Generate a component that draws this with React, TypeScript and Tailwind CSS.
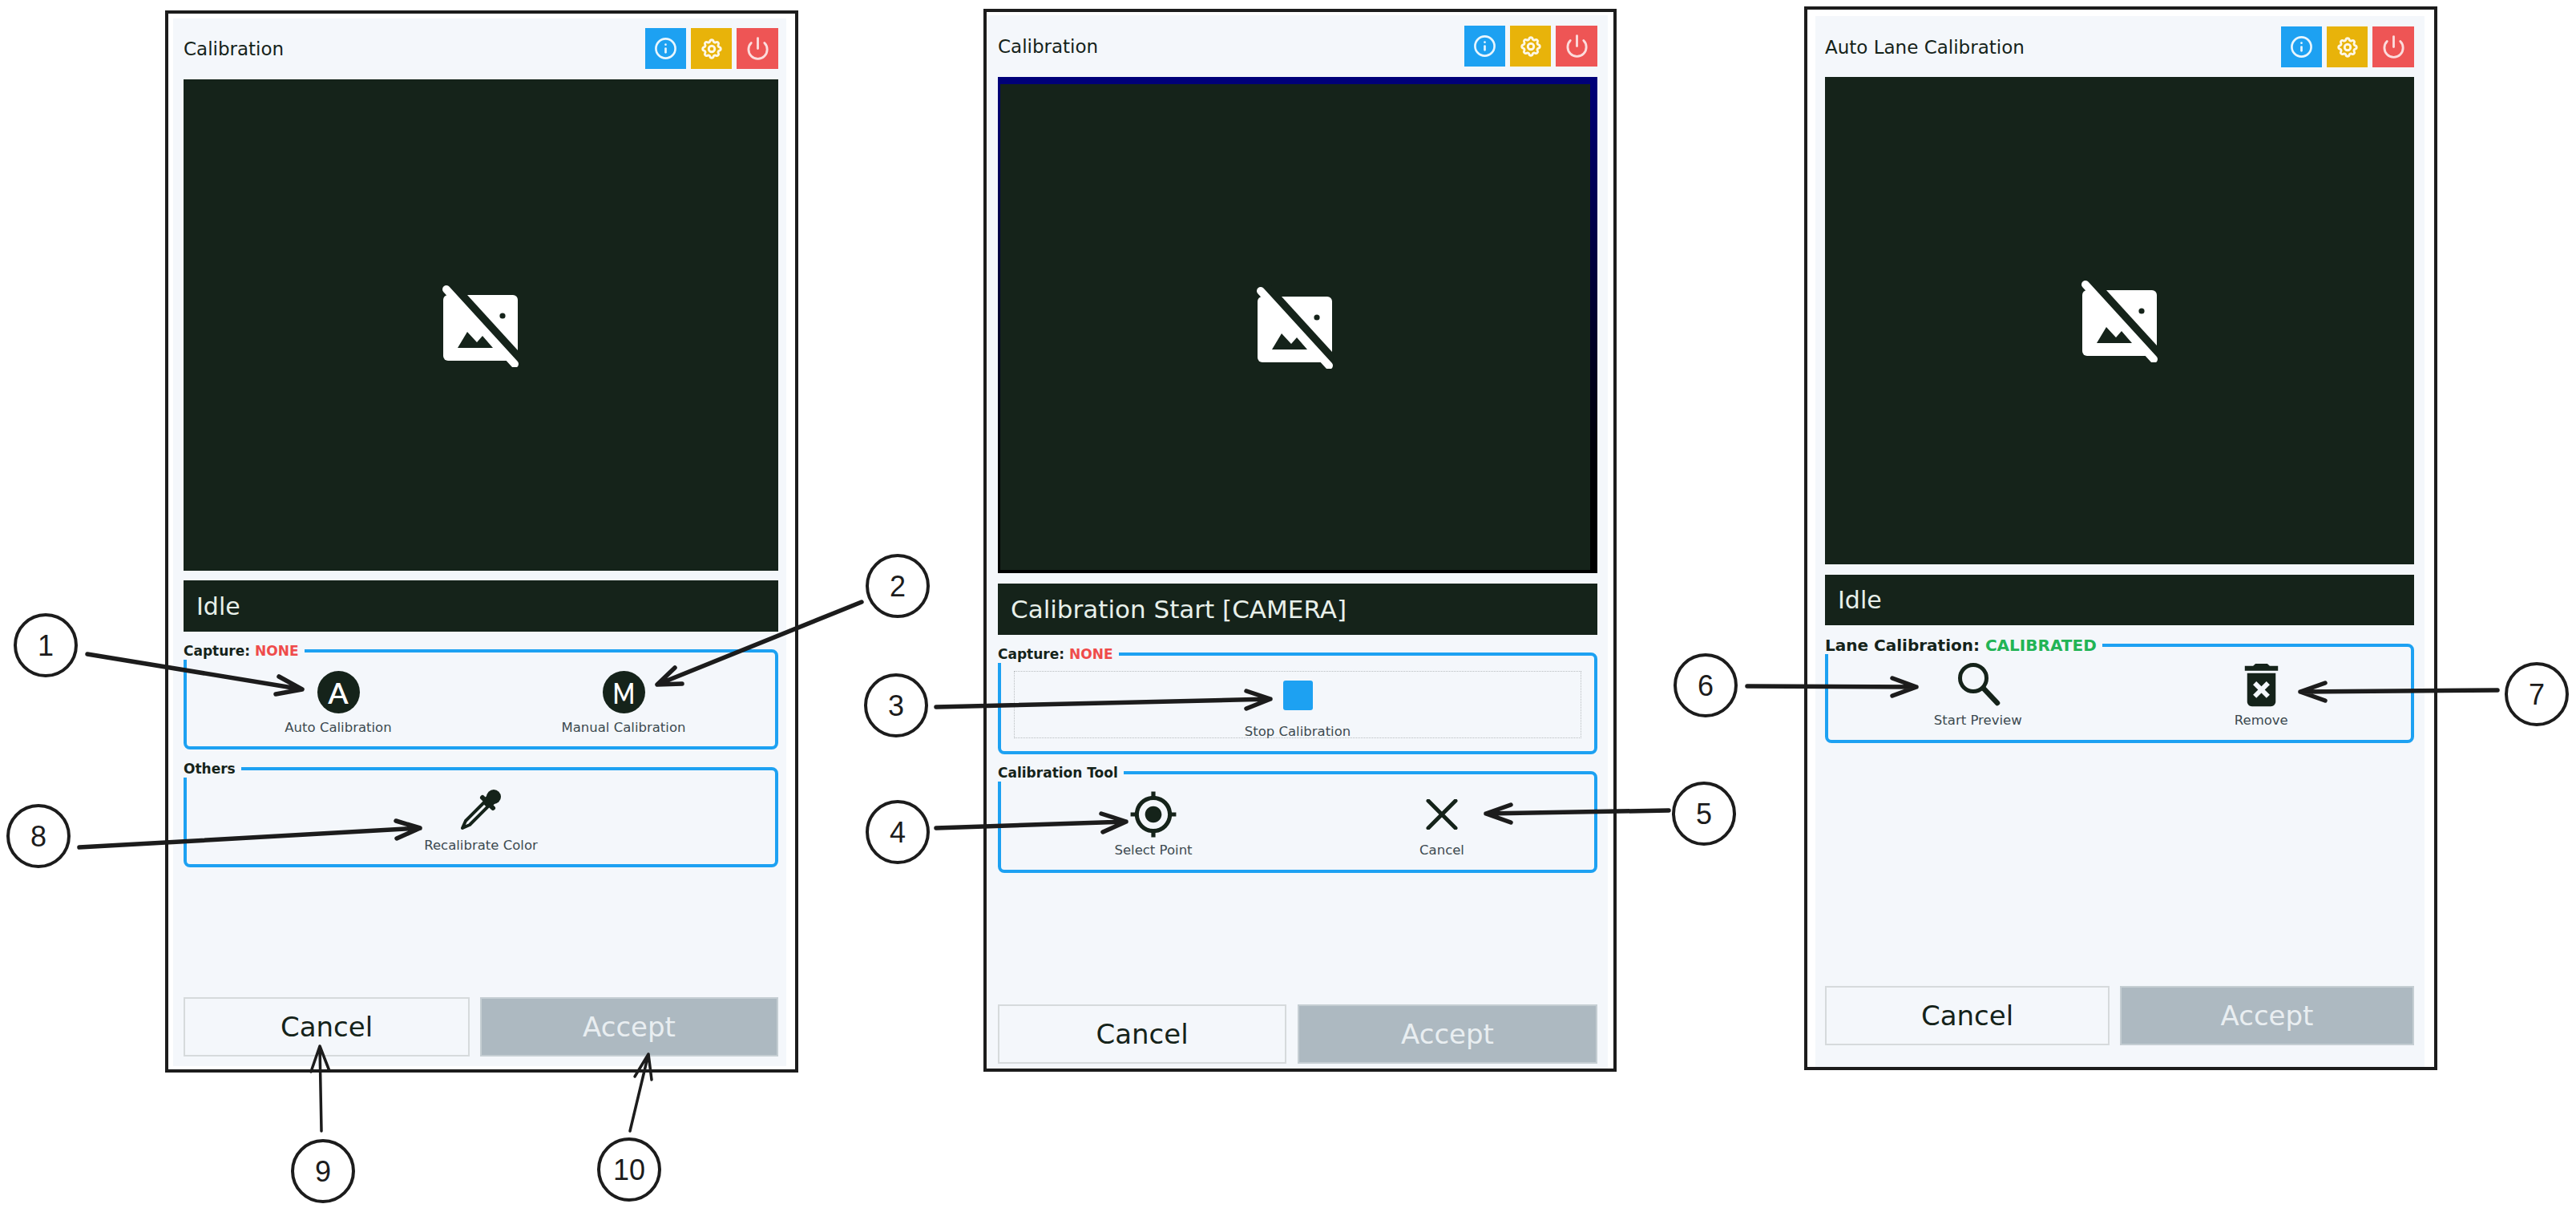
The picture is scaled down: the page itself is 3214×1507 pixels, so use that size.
import React from "react";
import { Info, Power } from "lucide-react";
import { TbSettings } from "react-icons/tb";
import { MdGpsFixed, MdDeleteForever } from "react-icons/md";

const DARK = "#15231a";

const NoImage = () => (
  <svg width="100" height="104" viewBox="0 0 100 104">
    <rect x="3" y="14" width="93" height="82" rx="6" fill="#fff" />
    <path d="M21 80 L33 60 L45 73 L52 65 L65 80 Z" fill={DARK} />
    <circle cx="77" cy="40" r="3.6" fill={DARK} />
    <path d="M33 14 L96 83 L100 104 L92 100 L7 7 L20 0 Z" fill={DARK} />
    <path d="M7 7 L92 100" stroke="#fff" strokeWidth="10" strokeLinecap="round" />
  </svg>
);

const Search = () => (
  <svg width="56" height="56" viewBox="0 0 56 56" fill="none" stroke={DARK} strokeLinecap="round">
    <circle cx="22" cy="20" r="16.5" strokeWidth="5" />
    <path d="M35 33 L52 51" strokeWidth="6.5" />
  </svg>
);

const Cross = () => (
  <svg width="40" height="38" viewBox="0 0 40 38" fill="none" stroke={DARK} strokeWidth="5" strokeLinecap="round">
    <path d="M3 2 L37 36 M37 2 L3 36" />
  </svg>
);

const Dropper = () => (
  <svg width="56" height="56" viewBox="0 0 56 56" fill="none" stroke={DARK} strokeLinecap="round" strokeLinejoin="round">
    <circle cx="44" cy="12" r="9" fill={DARK} stroke="none" />
    <path d="M38 18 L44 12" strokeWidth="14" />
    <path d="M30 13 L43 26" strokeWidth="6" />
    <path d="M33 18 L9 42 L5 51 L14 47 L38 23" strokeWidth="4" />
  </svg>
);

const Letter = ({ children, className }: { children: string; className?: string }) => (
  <div className="w-[53px] h-[53px] rounded-full bg-[#15231a] flex items-center justify-center text-white text-[37px] leading-none font-semibold font-['Lato',sans-serif]">
    <span className={className}>{children}</span>
  </div>
);

const Header = ({ title }: { title: string }) => (
  <div className="flex items-center justify-between">
    <div className="text-[23px] leading-[30px] text-[#15231a]">{title}</div>
    <div className="flex gap-[6px]">
      <div className="w-[51px] h-[51px] bg-[#1da1f2] flex items-center justify-center text-white/90">
        <Info size={29} strokeWidth={2.2} />
      </div>
      <div className="w-[51px] h-[51px] bg-[#e8b30a] flex items-center justify-center text-white/90">
        <TbSettings size={30} strokeWidth={2.3} />
      </div>
      <div className="w-[52px] h-[51px] bg-[#ee5555] flex items-center justify-center text-white/80">
        <Power size={31} strokeWidth={2.2} />
      </div>
    </div>
  </div>
);

const Status = ({ className, children }: { className: string; children: string }) => (
  <div className={"bg-[#15231a] text-[#e8f0ea] pl-[16px] flex items-center " + className}>{children}</div>
);

const Group = ({
  legend,
  state,
  stateClass,
  legendClass = "text-[17px]",
  className,
  children,
}: {
  legend: string;
  state?: string;
  stateClass?: string;
  legendClass?: string;
  className: string;
  children: React.ReactNode;
}) => (
  <fieldset className={"border-4 border-[#1da1f2] rounded-[8px] " + className}>
    <legend className={"-ml-[4px] pr-[7px] bg-[#f4f7fb] leading-[22px] font-bold text-[#15231a] " + legendClass}>
      {legend}
      {state && <span className={stateClass}> {state}</span>}
    </legend>
    {children}
  </fieldset>
);

const Tool = ({ icon, label }: { icon: React.ReactNode; label: string }) => (
  <div className="flex flex-col items-center">
    <div className="h-[52px] flex items-center justify-center text-[#15231a]">{icon}</div>
    <div className="mt-[8px] text-[16.5px] leading-[22px] text-[#3c4a50]">{label}</div>
  </div>
);

const Buttons = ({ cancel, gap }: { cancel: string; gap: string }) => (
  <div className={"mt-auto flex h-[74px] " + gap}>
    <div className={"border-2 border-[#d6dadc] flex items-center justify-center text-[34px] text-[#15231a] " + cancel}>
      Cancel
    </div>
    <div className="flex-1 bg-[#adb9c1] border-2 border-[#c5ced3] flex items-center justify-center text-[34px] text-[#e9eef1]">
      Accept
    </div>
  </div>
);

const Panel = ({
  outer,
  sheet,
  children,
}: {
  outer: string;
  sheet: string;
  children: React.ReactNode;
}) => (
  <div className={"shrink-0 border-4 border-[#1c1c1c] bg-white " + outer}>
    <div className={"h-full flex flex-col bg-[#f4f7fb] " + sheet}>{children}</div>
  </div>
);

const Callout = ({ n, cx, cy }: { n: number; cx: number; cy: number }) => (
  <g>
    <circle cx={cx} cy={cy} r="38" fill="#fff" stroke="#1c1c1c" strokeWidth="4" />
    <text
      x={cx}
      y={cy + 13}
      textAnchor="middle"
      fontSize="36"
      fill="#1c1c1c"
      fontFamily="'Liberation Sans', sans-serif"
    >
      {n}
    </text>
  </g>
);

const calloutList = [
  { n: 1, cx: 57, cy: 805 },
  { n: 2, cx: 1120, cy: 731 },
  { n: 3, cx: 1118, cy: 880 },
  { n: 4, cx: 1120, cy: 1038 },
  { n: 5, cx: 2126, cy: 1015 },
  { n: 6, cx: 2128, cy: 855 },
  { n: 7, cx: 3165, cy: 866 },
  { n: 8, cx: 48, cy: 1043 },
  { n: 9, cx: 403, cy: 1461 },
  { n: 10, cx: 785, cy: 1459 },
];

const arrows = [
  "M109 816 L377 860 M348 844 L377 860 L344 866",
  "M1075 751 L820 854 M842 833 L820 854 L851 853",
  "M1168 882 L1585 872 M1555 862 L1585 872 L1555 884",
  "M1168 1033 L1405 1025 M1374 1015 L1405 1025 L1376 1038",
  "M2082 1011 L1854 1015 M1885 1004 L1854 1015 L1885 1026",
  "M2180 856 L2391 857 M2361 846 L2391 857 L2361 868",
  "M3116 861 L2870 863 M2901 852 L2870 863 L2901 874",
  "M99 1057 L524 1033 M494 1024 L524 1033 L495 1046",
];

const thinArrows = [
  "M401 1411 L399 1305 M388 1337 L399 1305 L411 1336",
  "M786 1411 L809 1315 M792 1343 L809 1315 L813 1347",
];

export default function App() {
  return (
    <div className="relative w-[3214px] h-[1507px] overflow-hidden bg-white flex items-start font-['DejaVu_Sans',sans-serif]">
      <Panel
        outer="ml-[206px] mt-[13px] w-[790px] h-[1325px] pl-[6px] pr-[11px] pt-[6px] pb-[4px]"
        sheet="pl-[13px] pr-[10px] pt-[12px] pb-[12px]"
      >
        <Header title="Calibration" />
        <div className="mt-[13px] h-[613px] bg-[#15231a] flex items-center justify-center">
          <NoImage />
        </div>
        <Status className="mt-[12px] h-[64px] text-[30px]">Idle</Status>
        <Group legend="Capture:" state="NONE" stateClass="text-[#ef4b4b]" className="mt-[13px]">
          <div className="grid grid-cols-2 px-[11px] pt-[14px] pb-[12px]">
            <Tool icon={<Letter>A</Letter>} label="Auto Calibration" />
            <Tool icon={<Letter className="inline-block scale-x-[0.8]">M</Letter>} label="Manual Calibration" />
          </div>
        </Group>
        <Group legend="Others" className="mt-[13px]">
          <div className="flex justify-center pt-[14px] pb-[12px]">
            <Tool icon={<Dropper />} label="Recalibrate Color" />
          </div>
        </Group>
        <Buttons cancel="w-[357px]" gap="gap-[13px]" />
      </Panel>

      <Panel
        outer="ml-[231px] mt-[11px] w-[790px] h-[1326px] pl-[1px] pr-[7px] pt-[4px]"
        sheet="pl-[13px] pr-[13px] pt-[13px] pb-[6px]"
      >
        <Header title="Calibration" />
        <div className="mt-[13px] h-[619px] bg-gradient-to-b from-[#00007a] to-[#000000] pt-[9px] pl-[3px] pr-[9px] pb-[4px]">
          <div className="h-full bg-[#15231a] flex items-center justify-center">
            <NoImage />
          </div>
        </div>
        <Status className="mt-[13px] h-[64px] text-[31px]">Calibration Start [CAMERA]</Status>
        <Group legend="Capture:" state="NONE" stateClass="text-[#ef4b4b]" className="mt-[13px]">
          <div className="pt-[10px] pb-[16px] px-[16px]">
            <div className="h-[84px] border border-dotted border-[#b9bdc0] flex flex-col items-center pt-[11px]">
              <div className="w-[37px] h-[37px] shrink-0 rounded-[3px] bg-[#1da1f2]" />
              <div className="mt-[16px] shrink-0 text-[16.5px] leading-[22px] text-[#3c4a50]">Stop Calibration</div>
            </div>
          </div>
        </Group>
        <Group legend="Calibration Tool" className="mt-[12px]">
          <div className="grid grid-cols-2 px-[10px] pt-[15px] pb-[13px]">
            <Tool icon={<MdGpsFixed size={62} />} label="Select Point" />
            <Tool icon={<Cross />} label="Cancel" />
          </div>
        </Group>
        <Buttons cancel="w-[360px]" gap="gap-[14px]" />
      </Panel>

      <Panel
        outer="ml-[234px] mt-[8px] w-[790px] h-[1327px] pl-[10px] pr-[12px] pt-[8px]"
        sheet="pl-[12px] pr-[13px] pt-[13px] pb-[27px]"
      >
        <Header title="Auto Lane Calibration" />
        <div className="mt-[12px] h-[608px] bg-[#15231a] flex items-center justify-center">
          <NoImage />
        </div>
        <Status className="mt-[13px] h-[63px] text-[30px]">Idle</Status>
        <Group
          legend="Lane Calibration:"
          state="CALIBRATED"
          stateClass="text-[#22b455]"
          legendClass="text-[20px]"
          className="mt-[14px]"
        >
          <div className="grid grid-cols-2 px-[10px] pt-[12px] pb-[13px]">
            <Tool icon={<Search />} label="Start Preview" />
            <Tool icon={<MdDeleteForever size={71} className="shrink-0" />} label="Remove" />
          </div>
        </Group>
        <Buttons cancel="w-[355px]" gap="gap-[13px]" />
      </Panel>

      <svg className="absolute left-0 top-0 pointer-events-none" width="3214" height="1507" viewBox="0 0 3214 1507" fill="none">
        {arrows.map((d, i) => (
          <path key={i} d={d} stroke="#1c1c1c" strokeWidth="5.5" strokeLinecap="round" strokeLinejoin="round" />
        ))}
        {thinArrows.map((d, i) => (
          <path key={i} d={d} stroke="#1c1c1c" strokeWidth="3.5" strokeLinecap="round" strokeLinejoin="round" />
        ))}
        {calloutList.map((c) => (
          <Callout key={c.n} n={c.n} cx={c.cx} cy={c.cy} />
        ))}
      </svg>
    </div>
  );
}
